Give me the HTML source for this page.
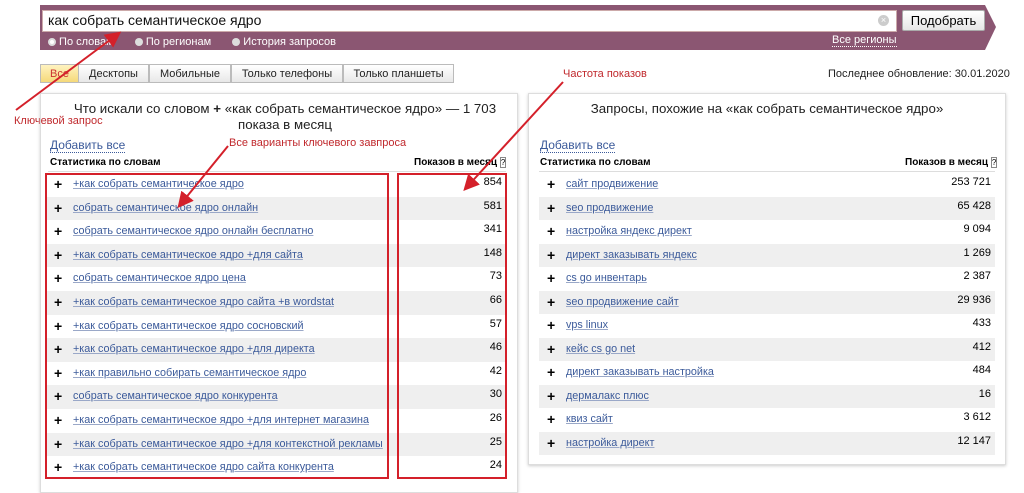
<!DOCTYPE html>
<html><head><meta charset="utf-8"><style>
*{margin:0;padding:0;box-sizing:border-box}
body{width:1024px;height:480px;overflow:hidden;background:#fff;font-family:"Liberation Sans","DejaVu Sans",sans-serif;font-size:11px;color:#000;position:relative}
.a{position:absolute}
.lnk{color:#3b5a9a;text-decoration:underline;text-decoration-color:#9aa8c8}
.row{position:absolute;height:23.6px;line-height:23px;font-size:10.8px}
.row.g{background:#efefef}
.row .p{position:absolute;left:8px;font-weight:bold;font-size:14px}
.row .t{position:absolute;left:27px;white-space:nowrap}
.row .n{position:absolute;right:4px;top:-2px;font-size:11px}
.red{color:#c0282c;font-size:11px}
.tab{position:absolute;top:64px;height:19px;line-height:18px;border:1px solid #bbb;background:linear-gradient(#fff,#e8e8e8);font-size:11px;text-align:center;color:#222}
</style></head><body>
<svg class="a" style="left:0;top:0" width="1024" height="55"><polygon points="40,5 985,5 996,27 985,50 40,50" fill="#8b5672"/></svg>
<div class="a" style="left:42px;top:10px;width:855px;height:22px;background:#fff;border:1px solid #caa"></div>
<div class="a" style="left:48px;top:12px;font-size:14px;color:#111">как собрать семантическое ядро</div>
<div class="a" style="left:878px;top:15px;width:11px;height:11px;border-radius:50%;background:#ccc;color:#fff;font-size:9px;line-height:11px;text-align:center">×</div>
<div class="a" style="left:902px;top:10px;width:83px;height:21px;background:linear-gradient(#fff,#e6e6e6);border:1px solid #aaa;border-radius:2px;font-size:13px;line-height:19px;text-align:center">Подобрать</div>
<div class="a" style="left:48px;top:36px;color:#fff;font-size:11px">
<span style="display:inline-block;width:8px;height:8px;border-radius:50%;background:#fff;border:2px solid #ddd;vertical-align:-1px"></span> По словам
<span style="margin-left:18px;display:inline-block;width:8px;height:8px;border-radius:50%;background:#ddd;vertical-align:-1px"></span> По регионам
<span style="margin-left:18px;display:inline-block;width:8px;height:8px;border-radius:50%;background:#ddd;vertical-align:-1px"></span> История запросов</div>
<div class="a" style="left:832px;top:34px;color:#fff;font-size:11px;border-bottom:1px dotted #fff">Все регионы</div>

<div class="tab" style="left:40px;width:39px;background:linear-gradient(#fff3c0,#f5d97a);color:#c33">Все</div>
<div class="tab" style="left:78px;width:71px">Десктопы</div>
<div class="tab" style="left:149px;width:82px">Мобильные</div>
<div class="tab" style="left:231px;width:112px">Только телефоны</div>
<div class="tab" style="left:343px;width:111px">Только планшеты</div>
<div class="a" style="left:828px;top:68px;font-size:11px;color:#222">Последнее обновление: 30.01.2020</div>
<div class="a red" style="left:563px;top:68px">Частота показов</div>
<div class="a red" style="left:14px;top:115px">Ключевой запрос</div>
<div class="a red" style="left:229px;top:137px">Все варианты ключевого завпроса</div>

<div class="a" style="left:40px;top:93px;width:478px;height:400px;border:1px solid #ddd;box-shadow:0 1px 3px #ccc"></div>
<div class="a" style="left:528px;top:93px;width:478px;height:372px;border:1px solid #ddd;box-shadow:0 1px 3px #ccc"></div>
<div class="a" style="left:55px;top:101px;width:460px;text-align:center;font-size:13.3px;line-height:16px;color:#222">Что искали со словом <b>+</b> «как собрать семантическое ядро» — 1 703<br>показа в месяц</div>
<div class="a" style="left:528px;top:101px;width:478px;text-align:center;font-size:13.3px;color:#222">Запросы, похожие на «как собрать семантическое ядро»</div>
<div class="a lnk" style="left:50px;top:138px;font-size:12px;text-decoration:none;border-bottom:1px dotted #3b5a9a">Добавить все</div>
<div class="a lnk" style="left:540px;top:138px;font-size:12px;text-decoration:none;border-bottom:1px dotted #3b5a9a">Добавить все</div>
<div class="a" style="left:50px;top:157px;font-size:10px;font-weight:bold">Статистика по словам</div>
<div class="a" style="left:414px;top:157px;font-size:10px;font-weight:bold">Показов в месяц <span style="border:1px solid #888;font-size:8px;font-weight:normal">?</span></div>
<div class="a" style="left:540px;top:157px;font-size:10px;font-weight:bold">Статистика по словам</div>
<div class="a" style="left:905px;top:157px;font-size:10px;font-weight:bold">Показов в месяц <span style="border:1px solid #888;font-size:8px;font-weight:normal">?</span></div>
<div class="a" style="left:48px;top:171px;width:458px;border-top:1px solid #ddd"></div>
<div class="a" style="left:539px;top:171px;width:456px;border-top:1px solid #ddd"></div>

<div id="L"></div>
<script>
var L=[["+как собрать семантическое ядро",854],["собрать семантическое ядро онлайн",581],["собрать семантическое ядро онлайн бесплатно",341],["+как собрать семантическое ядро +для сайта",148],["собрать семантическое ядро цена",73],["+как собрать семантическое ядро сайта +в wordstat",66],["+как собрать семантическое ядро сосновский",57],["+как собрать семантическое ядро +для директа",46],["+как правильно собирать семантическое ядро",42],["собрать семантическое ядро конкурента",30],["+как собрать семантическое ядро +для интернет магазина",26],["+как собрать семантическое ядро +для контекстной рекламы",25],["+как собрать семантическое ядро сайта конкурента",24]];
var R=[["сайт продвижение","253 721"],["seo продвижение","65 428"],["настройка яндекс директ","9 094"],["директ заказывать яндекс","1 269"],["cs go инвентарь","2 387"],["seo продвижение сайт","29 936"],["vps linux","433"],["кейс cs go net","412"],["директ заказывать настройка","484"],["дермалакс плюс","16"],["квиз сайт","3 612"],["настройка директ","12 147"]];
var h="";
L.forEach(function(r,i){h+='<div class="row'+(i%2?' g':'')+'" style="left:46px;top:'+(173+i*23.6)+'px;width:460px"><span class="p">+</span><span class="t lnk">'+r[0]+'</span><span class="n">'+r[1]+'</span></div>';});
R.forEach(function(r,i){h+='<div class="row'+(i%2?' g':'')+'" style="left:539px;top:'+(173+i*23.5)+'px;width:456px"><span class="p">+</span><span class="t lnk">'+r[0]+'</span><span class="n">'+r[1]+'</span></div>';});
document.getElementById("L").innerHTML=h;
</script>
<div class="a" style="left:45px;top:173px;width:344px;height:306px;border:2px solid #d4202a"></div>
<div class="a" style="left:397px;top:173px;width:110px;height:306px;border:2px solid #d4202a"></div>
<svg class="a" style="left:0;top:0" width="1024" height="480">
<defs><marker id="m" markerWidth="8" markerHeight="8" refX="6" refY="4" orient="auto"><path d="M0,0 L8,4 L0,8z" fill="#d4202a"/></marker></defs>
<g stroke="#d4202a" stroke-width="2" fill="none" marker-end="url(#m)">
<line x1="16" y1="110" x2="118" y2="34"/>
<line x1="228" y1="146" x2="180" y2="205"/>
<line x1="563" y1="82" x2="466" y2="188"/>
</g></svg>
</body></html>
